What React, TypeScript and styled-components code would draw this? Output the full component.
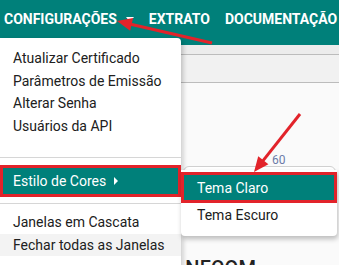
import React from "react";
import styled, { createGlobalStyle } from "styled-components";

const TEAL = "#00807a";
const RED = "#e2232a";

const Global = createGlobalStyle`
  html, body { margin: 0; padding: 0; background: #ffffff; }
  body { font-family: Roboto, "Noto Sans", Arial, sans-serif; overflow: hidden; }
  * { box-sizing: border-box; }
`;

const Page = styled.div`
  position: relative;
  width: 339px;
  height: 265px;
  overflow: hidden;
  background: #ffffff;
`;

const TopBar = styled.nav`
  height: 45px;
  background: ${TEAL};
  display: flex;
  align-items: flex-start;
  padding-left: 4px;
  gap: 15px;
  white-space: nowrap;
`;

const NavItem = styled.span`
  display: flex;
  align-items: center;
  gap: 9px;
  height: 38px;
  color: #ffffff;
  font-weight: 700;
  font-size: 14px;
  letter-spacing: 0;
`;

const Caret = styled.span`
  width: 0;
  height: 0;
  border-left: 4px solid transparent;
  border-right: 4px solid transparent;
  border-top: 5px solid #ffffff;
  margin-top: 1px;
`;

const Strip = styled.div<{ $h: number; $bg: string }>`
  height: ${(p) => p.$h}px;
  background: ${(p) => p.$bg};
  border-bottom: 1px solid #bcbcbc;
`;

const Content = styled.div`
  margin-left: 183px;
  background: #fafafa;
  height: 200px;
  display: flex;
  flex-direction: column;
`;

const Counter = styled.span`
  margin-top: 70px;
  margin-left: 89px;
  font-size: 12px;
  color: #6b7aa8;
  line-height: 14px;
`;

const Card = styled.div`
  margin-top: -1px;
  margin-right: 3px;
  height: 66px;
  border: 1px solid #d0d0d0;
  border-radius: 6px;
  background: #ffffff;
`;

const Heading = styled.h2`
  margin: 24px 0 0 -28px;
  font-size: 20px;
  font-weight: 500;
  color: #222222;
  white-space: nowrap;
  letter-spacing: 0.3px;
`;

const Menu = styled.div`
  position: absolute;
  left: 0;
  top: 38px;
  width: 181px;
  height: 240px;
  background: #ffffff;
  border-radius: 0 4px 0 0;
  box-shadow: 2px 2px 5px rgba(0, 0, 0, 0.22);
  padding-top: 9px;
  display: flex;
  flex-direction: column;
`;

const Item = styled.div<{ $hover?: boolean }>`
  height: 22.5px;
  display: flex;
  align-items: center;
  padding-left: 13px;
  font-size: 14px;
  color: #202020;
  white-space: nowrap;
  background: ${(p) => (p.$hover ? "#f3f3f3" : "transparent")};
`;

const ActiveItem = styled.div<{ $h: number; $pad: number }>`
  height: ${(p) => p.$h}px;
  display: flex;
  align-items: center;
  gap: 8px;
  padding-left: ${(p) => p.$pad}px;
  font-size: 14px;
  color: #ffffff;
  background: ${TEAL};
  border: 3px solid ${RED};
  white-space: nowrap;
`;

const RightCaret = styled.span`
  width: 0;
  height: 0;
  border-top: 4px solid transparent;
  border-bottom: 4px solid transparent;
  border-left: 4px solid #ffffff;
`;

const Divider = styled.div<{ $top: number; $bottom: number }>`
  height: 1px;
  background: #d6d6d6;
  margin: ${(p) => p.$top}px 0 ${(p) => p.$bottom}px;
`;

const SubMenu = styled.div`
  position: absolute;
  left: 181px;
  top: 170px;
  width: 156px;
  height: 66px;
  background: #ffffff;
  border-radius: 0 0 4px 4px;
  box-shadow: 1px 3px 5px rgba(0, 0, 0, 0.25);
  padding-top: 2px;
  display: flex;
  flex-direction: column;
`;

const SubItem = styled.div`
  height: 23px;
  display: flex;
  align-items: center;
  padding-left: 16px;
  font-size: 14px;
  color: #202020;
`;

const Arrows = styled.svg`
  position: absolute;
  left: 0;
  top: 0;
  pointer-events: none;
`;

function Arrow({ x1, y1, x2, y2 }: { x1: number; y1: number; x2: number; y2: number }) {
  const dx = x2 - x1;
  const dy = y2 - y1;
  const len = Math.hypot(dx, dy);
  const ux = dx / len;
  const uy = dy / len;
  const hl = 15;
  const hw = 6.5;
  const bx = x2 - ux * hl;
  const by = y2 - uy * hl;
  const px = -uy;
  const py = ux;
  const pts = `${x2},${y2} ${bx + px * hw},${by + py * hw} ${bx - px * hw},${by - py * hw}`;
  return (
    <g>
      <line x1={x1} y1={y1} x2={bx + ux * 2} y2={by + uy * 2} stroke={RED} strokeWidth={3} />
      <polygon points={pts} fill={RED} />
    </g>
  );
}

export default function App() {
  return (
    <Page>
      <Global />
      <TopBar>
        <NavItem>
          CONFIGURAÇÕES <Caret />
        </NavItem>
        <NavItem>EXTRATO</NavItem>
        <NavItem>DOCUMENTAÇÃO</NavItem>
      </TopBar>
      <Strip $h={10} $bg="#ececec" />
      <Strip $h={28} $bg="#f1f1f1" />
      <Content>
        <Counter>60</Counter>
        <Card />
        <Heading>DE NFCOM</Heading>
      </Content>

      <Menu>
        <Item>Atualizar Certificado</Item>
        <Item>Parâmetros de Emissão</Item>
        <Item>Alterar Senha</Item>
        <Item>Usuários da API</Item>
        <Divider $top={20} $bottom={7} />
        <ActiveItem $h={32} $pad={10}>
          Estilo de Cores <RightCaret />
        </ActiveItem>
        <Divider $top={6} $bottom={7} />
        <Item>Janelas em Cascata</Item>
        <Item $hover>Fechar todas as Janelas</Item>
      </Menu>

      <SubMenu>
        <ActiveItem $h={31} $pad={13}>Tema Claro</ActiveItem>
        <SubItem>Tema Escuro</SubItem>
      </SubMenu>

      <Arrows width={339} height={265} viewBox="0 0 339 265">
        <Arrow x1={212} y1={43} x2={117} y2={21} />
        <Arrow x1={300} y1={114} x2={254} y2={172} />
      </Arrows>
    </Page>
  );
}
